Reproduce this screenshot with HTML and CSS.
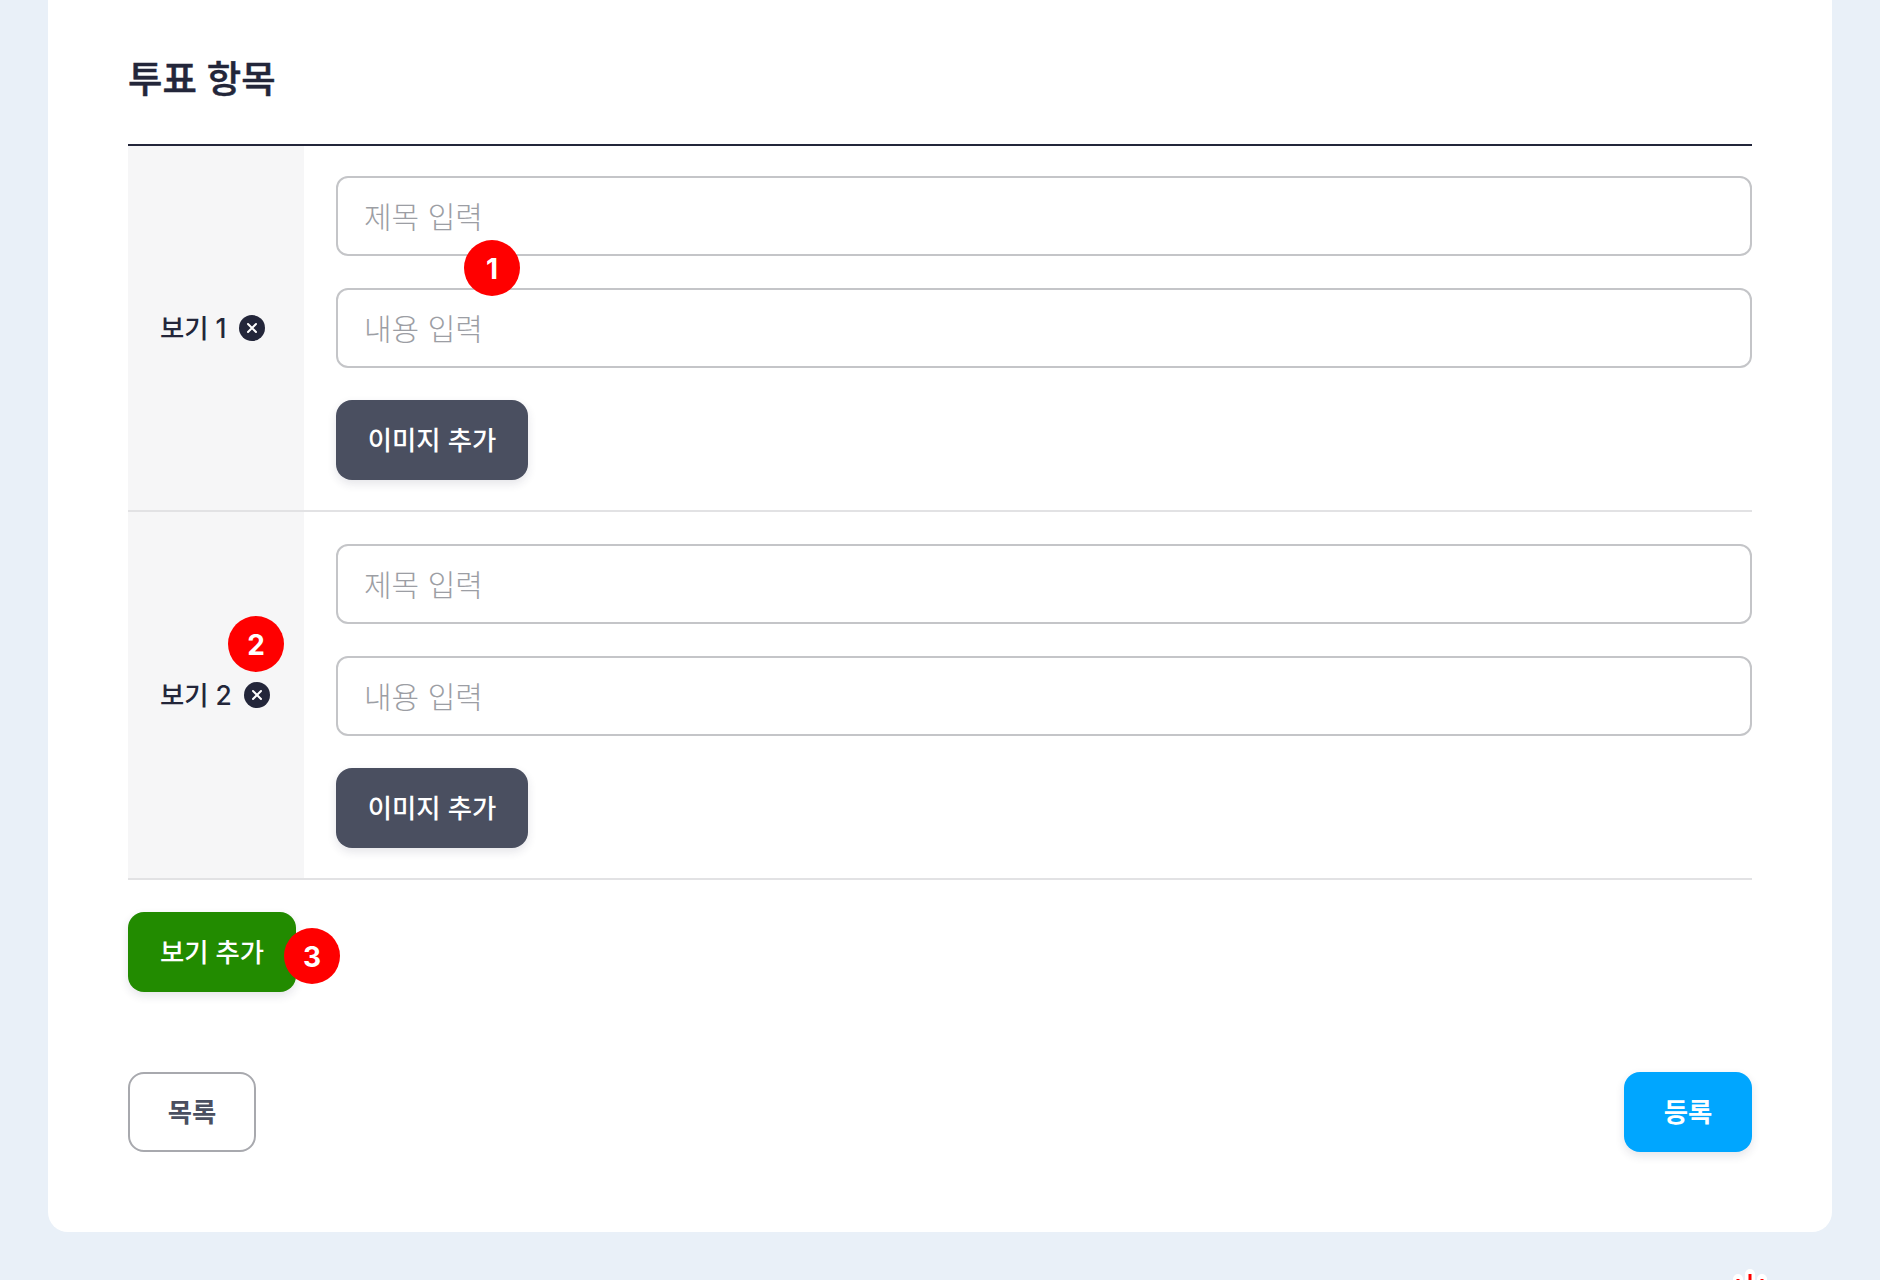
FILE: index.html
```html
<!DOCTYPE html>
<html>

<head>
    <meta charset="UTF-8" />
    <title>투표 항목</title>
    <link rel="stylesheet" href="styles.css">
</head>

<body>
    <div class="card">
        <h2 class="section-title">투표 항목</h2>
        <div class="option-list">
            <div class="option-row">
                <div class="option-label">
                    <span class="label-text">보기 1</span>
                    <span class="remove-btn"><svg width="12" height="12" viewBox="0 0 12 12"><path d="M2 2l8 8M10 2l-8 8" stroke="#fff" stroke-width="2" stroke-linecap="round"/></svg></span>
                </div>
                <div class="option-fields">
                    <input class="text-input" type="text" placeholder="제목 입력">
                    <input class="text-input" type="text" placeholder="내용 입력">
                    <button class="btn btn-gray">이미지 추가</button>
                </div>
            </div>
            <div class="option-row">
                <div class="option-label">
                    <span class="label-text">보기 2</span>
                    <span class="remove-btn"><svg width="12" height="12" viewBox="0 0 12 12"><path d="M2 2l8 8M10 2l-8 8" stroke="#fff" stroke-width="2" stroke-linecap="round"/></svg></span>
                </div>
                <div class="option-fields">
                    <input class="text-input" type="text" placeholder="제목 입력">
                    <input class="text-input" type="text" placeholder="내용 입력">
                    <button class="btn btn-gray">이미지 추가</button>
                </div>
            </div>
        </div>
        <button class="btn btn-green">보기 추가</button>
        <div class="footer-actions">
            <button class="btn btn-outline">목록</button>
            <button class="btn btn-blue">등록</button>
        </div>
    </div>

    <span class="marker marker-1">1</span>
    <span class="marker marker-2">2</span>
    <span class="marker marker-3">3</span>
    <svg class="cut-mark" width="48" height="14" viewBox="0 0 48 14"><path d="M12 14v-1M24 14V8M36 14v-1" stroke="#fff" stroke-width="10" stroke-linecap="round"/><path d="M12 14v-1M24 14V8M36 14v-1" stroke="#f00" stroke-width="3"/></svg>
</body>

</html>
```

FILE: styles.css
```css
* {
    box-sizing: border-box;
}

html,
body {
    height: 1280px;
    overflow: hidden;
}

body {
    background-color: #e9f0f8;
    color: #23263a;
    font-family: Inter, "Noto Sans CJK KR", sans-serif;
    font-size: 24px;
    margin: 0;
    padding: 0 48px;
    position: relative;
}

.card {
    background-color: #fff;
    border-radius: 0 0 20px 20px;
    height: 1232px;
    padding: 52px 80px 0 80px;
}

.section-title {
    -webkit-text-stroke: 0.5px #23263a;
    font-size: 37.4px;
    font-weight: 500;
    line-height: 56px;
    margin: 0;
    padding-bottom: 36px;
}

.option-list {
    border-top: 2px solid #23263a;
}

.option-row {
    border-bottom: 2px solid #e2e2e4;
    display: flex;
}

.option-label {
    align-items: center;
    background-color: #f6f6f7;
    display: flex;
    font-size: 26.4px;
    font-weight: 500;
    gap: 12px;
    padding-left: 32px;
    width: 176px;
}

.label-text {
    margin-bottom: 3px;
}

.remove-btn {
    align-items: center;
    background-color: #23263a;
    border-radius: 50%;
    display: flex;
    height: 26px;
    justify-content: center;
    width: 26px;
}

.option-fields {
    display: flex;
    flex: 1;
    flex-direction: column;
    gap: 32px;
    padding: 32px 0 30px 32px;
}

.option-row:first-child .option-fields {
    padding-top: 30px;
}

.text-input {
    border: 2px solid #c4c5c8;
    border-radius: 12px;
    color: #23263a;
    font-family: inherit;
    font-size: 30px;
    height: 80px;
    padding: 1px 26px 0 26px;
    width: 100%;
}

.text-input::placeholder {
    color: #9c9ea4;
    font-weight: 300;
}

.btn {
    border: none;
    border-radius: 16px;
    color: #fff;
    cursor: pointer;
    font-family: inherit;
    font-size: 26.4px;
    font-weight: 500;
    height: 80px;
    padding: 0 0 3px 0;
}

.btn-gray {
    background-color: #4a4f60;
    box-shadow: 0 4px 10px rgba(40, 45, 70, 0.12);
    width: 192px;
}

.btn-green {
    background-color: #228b00;
    box-shadow: 0 4px 10px rgba(40, 45, 70, 0.12);
    display: block;
    margin-top: 32px;
    width: 168px;
}

.btn-blue {
    background-color: #00a6ff;
    box-shadow: 0 4px 10px rgba(40, 45, 70, 0.12);
    font-weight: 700;
    width: 128px;
}

.btn-outline {
    background-color: #fff;
    border: 2px solid #a8a9ae;
    color: #4a4f60;
    font-weight: 700;
    width: 128px;
}

.footer-actions {
    display: flex;
    justify-content: space-between;
    margin-top: 80px;
}

.marker {
    align-items: center;
    background-color: #f00;
    border-radius: 50%;
    color: #fff;
    display: flex;
    font-size: 28px;
    font-weight: 700;
    height: 56px;
    justify-content: center;
    padding-top: 2px;
    position: absolute;
    width: 56px;
}

.marker-1 {
    left: 464px;
    top: 240px;
}

.marker-2 {
    left: 228px;
    top: 616px;
}

.marker-3 {
    left: 284px;
    top: 928px;
}

.cut-mark {
    left: 1726px;
    position: absolute;
    top: 1266px;
}
```
